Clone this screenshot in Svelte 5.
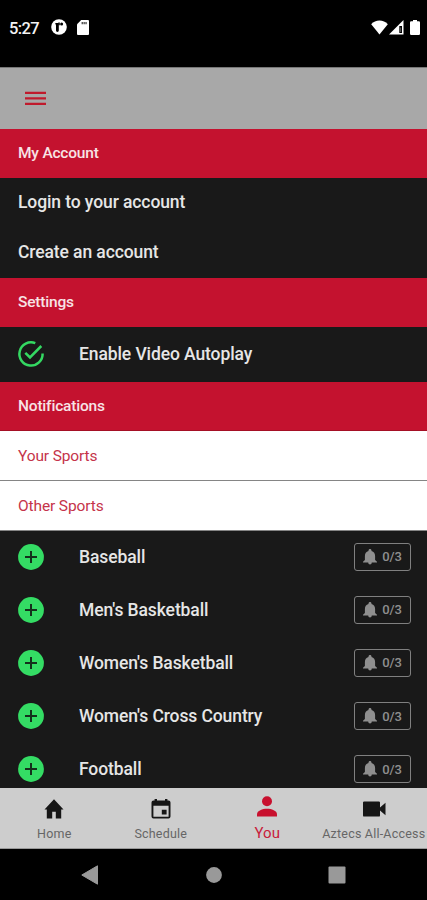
<script>
  const accountLinks = ['Login to your account', 'Create an account'];

  const sports = [
    { name: "Baseball", alerts: '0/3' },
    { name: "Men's Basketball", alerts: '0/3' },
    { name: "Women's Basketball", alerts: '0/3' },
    { name: "Women's Cross Country", alerts: '0/3' },
    { name: "Football", alerts: '0/3' }
  ];

  const tabs = [
    { id: 'home', label: 'Home' },
    { id: 'schedule', label: 'Schedule' },
    { id: 'you', label: 'You' },
    { id: 'video', label: 'Aztecs All-Access' }
  ];

  let activeTab = $state('you');
</script>

<div class="screen">
  <div class="status-bar">
    <div class="status-left">
      <span class="time">5:27</span>
      <svg width="16" height="16" viewBox="0 0 16 16">
        <circle cx="8" cy="8" r="7.8" fill="#fff" />
        <path d="M4.2 4h3.6v7.600a1.400 1.400 0 0 1-2.800 0V6.500z" fill="#000" />
        <path d="M7.300 3.600h1.500v2.600H7.300z" fill="#000" />
        <circle cx="10.600" cy="5.100" r="1.500" fill="#000" />
      </svg>
      <svg class="sd-card" width="12" height="15" viewBox="0 0 12 15">
        <path d="M4.2 0H11a1 1 0 0 1 1 1v13a1 1 0 0 1-1 1H1a1 1 0 0 1-1-1V4.3z" fill="#fff" />
        <path d="M4.6 2h1.300v2.200H4.6zM6.500 2h1.300v2.200H6.500zM8.400 2h1.300v2.200H8.400z" fill="#444" />
      </svg>
    </div>
    <div class="status-right">
      <svg width="17" height="15" viewBox="0 0 17 15">
        <path d="M8.5 14.5L.2 4.2C2.4 1.8 5.3.5 8.5.5s6.100 1.300 8.300 3.700z" fill="#fff" />
      </svg>
      <svg width="15" height="15" viewBox="0 0 15 15">
        <path d="M14.500 0v14.500H0z" fill="#fff" />
        <path d="M10.300 6h2.700v7h-2.700z" fill="#000" />
        <path d="M11.300 7.500h.8V12h-.8z" fill="#777" />
      </svg>
      <svg class="battery" width="10" height="15" viewBox="0 0 10 15">
        <path d="M3 0h4v1.200h1.800A1.200 1.200 0 0 1 10 2.400v11.400A1.200 1.200 0 0 1 8.800 15H1.200A1.200 1.200 0 0 1 0 13.800V2.400a1.200 1.200 0 0 1 1.200-1.200H3z" fill="#fff" />
      </svg>
    </div>
  </div>

  <header class="app-bar">
    <button class="menu" aria-label="Menu">
      <svg width="21" height="15" viewBox="0 0 21 15">
        <path d="M0 1.800h21M0 7.300h21M0 12.800h21" stroke="#c01a2c" stroke-width="2.200" />
      </svg>
    </button>
  </header>

  <main>
    <h2 class="section">My Account</h2>
    {#each accountLinks as link}
      <div class="link">{link}</div>
    {/each}

    <h2 class="section">Settings</h2>
    <div class="option">
      <svg class="option-icon" width="26" height="26" viewBox="0 0 26 26" fill="none" stroke="#34d862" stroke-width="2.500">
        <path d="M17.300 2.200A11.600 11.600 0 1 0 24.600 12.500" />
        <path d="M7.300 11.800l4.700 4.700L23.300 5" />
      </svg>
      <span class="label">Enable Video Autoplay</span>
    </div>

    <h2 class="section last">Notifications</h2>
    <h3 class="sub">Your Sports</h3>
    <h3 class="sub">Other Sports</h3>

    <ul class="sports">
      {#each sports as sport}
        <li class="sport">
          <svg class="option-icon" width="26" height="26" viewBox="0 0 26 26">
            <circle cx="13" cy="13" r="12.900" fill="#34dc64" />
            <path d="M13 7v12M7 13h12" stroke="#14301c" stroke-width="2" />
          </svg>
          <span class="label">{sport.name}</span>
          <button class="alerts">
            <svg width="14" height="16" viewBox="0 0 14 16">
              <path d="M7 0c.9 0 1.500.6 1.500 1.500v.6c2.400.6 3.600 2.500 3.600 4.900v4L14 12.800v.8H0v-.8L1.900 11V7c0-2.400 1.200-4.300 3.600-4.900v-.6C5.500.6 6.100 0 7 0zM5.200 13.600h3.600a1.800 2 0 0 1-3.600 0z" fill="#8f8f8f" />
            </svg>
            <span>{sport.alerts}</span>
          </button>
        </li>
      {/each}
    </ul>
  </main>

  <nav class="tab-bar">
    {#each tabs as tab}
      <button class="tab" class:active={activeTab === tab.id} onclick={() => (activeTab = tab.id)}>
        <svg width="24" height="24" viewBox="0 0 24 24" fill="currentColor">
          {#if tab.id === 'home'}
            <path d="M12 2.300L2.500 12.400h2.300v9h5.400v-6.600h3.600v6.600h5.400v-9h2.300z" />
          {:else if tab.id === 'schedule'}
            <path d="M17.600 12.800h-4.800v4.800h4.800zM16 2v1.600H8V2H5.600v1.600H4.500a2 2 0 0 0-2 2v14a2 2 0 0 0 2 2h15a2 2 0 0 0 2-2v-14a2 2 0 0 0-2-2h-1.100V2zm3.600 17.800H4.400V8.800h15.200z" />
          {:else if tab.id === 'you'}
            <circle cx="12" cy="7.200" r="5" />
            <path d="M2 22.500v-2.300c0-3.600 5.500-5.500 10-5.500s10 1.900 10 5.500v2.300z" />
          {:else}
            <path d="M18 10.500V5.600a1.200 1.200 0 0 0-1.200-1.200H2.200A1.200 1.200 0 0 0 1 5.600v12.800a1.200 1.200 0 0 0 1.200 1.200h14.600a1.200 1.200 0 0 0 1.200-1.200v-4.900l5.500 4.700V5.800z" />
          {/if}
        </svg>
        <span>{tab.label}</span>
      </button>
    {/each}
  </nav>

  <div class="system-nav">
    <svg width="18" height="20" viewBox="0 0 18 20"><path d="M16.500.8v18.400L.8 10z" fill="#999" stroke="#999" stroke-linejoin="round" /></svg>
    <svg width="16" height="16" viewBox="0 0 16 16"><circle cx="8" cy="8" r="7.900" fill="#999" /></svg>
    <svg width="18" height="18" viewBox="0 0 18 18"><rect x=".5" y=".5" width="17" height="17" rx="1" fill="#999" /></svg>
  </div>
</div>

<style>
  :global(body) {
    margin: 0;
    background: #000;
  }

  .screen {
    display: flex;
    flex-direction: column;
    width: 427px;
    height: 900px;
    overflow: hidden;
    background: #000;
    font-family: Roboto, "Liberation Sans", sans-serif;
  }

  svg {
    display: block;
    flex: none;
    overflow: visible;
  }

  button {
    padding: 0;
    border: none;
    background: none;
    font-family: inherit;
  }

  .status-bar {
    display: flex;
    flex: none;
    justify-content: space-between;
    box-sizing: border-box;
    height: 67px;
    padding: 18px 7px 0 9px;
  }

  .status-left,
  .status-right {
    display: flex;
    align-items: center;
    height: 18px;
  }

  .time {
    width: 42px;
    padding-top: 2px;
    color: #f4f4f4;
    font-size: 16.5px;
    font-weight: 500;
    letter-spacing: -0.6px;
  }

  .sd-card {
    margin-left: 10px;
  }

  .status-right {
    gap: 1px;
  }

  .battery {
    margin-left: 5px;
  }

  .app-bar {
    display: flex;
    flex: none;
    align-items: center;
    box-sizing: border-box;
    height: 62px;
    padding-left: 25px;
    border-top: 1px solid #777;
    background: #a8a8a8;
  }

  main {
    flex: none;
    height: 659px;
    overflow: hidden;
    background: #191919;
  }

  .section {
    box-sizing: border-box;
    height: 49px;
    margin: 0;
    padding-left: 18px;
    background: #c4122f;
    color: #f7e3e5;
    font-size: 15.5px;
    font-weight: 500;
    letter-spacing: -0.2px;
    line-height: 49px;
  }

  .section.last {
    border-bottom: 1px solid #a50f25;
  }

  .link {
    height: 50px;
    padding-left: 18px;
    color: #e6e6e6;
    font-size: 17.5px;
    font-weight: 500;
    letter-spacing: -0.1px;
    line-height: 49px;
  }

  .option,
  .sport {
    display: flex;
    align-items: center;
    box-sizing: border-box;
    padding: 0 16px 2px 18px;
  }

  .option {
    height: 55px;
  }

  .option-icon {
    margin-right: 35px;
  }

  .label {
    flex: 1;
    color: #e6e6e6;
    font-size: 17.5px;
    font-weight: 500;
    letter-spacing: -0.1px;
    white-space: nowrap;
  }

  .sub {
    box-sizing: border-box;
    height: 50px;
    margin: 0;
    padding-left: 18px;
    border-bottom: 1px solid #858585;
    background: #fff;
    color: #c5344a;
    font-size: 15.5px;
    font-weight: 400;
    letter-spacing: -0.12px;
    line-height: 50px;
  }

  .sports {
    margin: 0;
    padding: 0;
    list-style: none;
  }

  .sport {
    height: 53.2px;
  }

  .alerts {
    display: flex;
    align-items: center;
    justify-content: center;
    gap: 5px;
    box-sizing: border-box;
    width: 57px;
    height: 28px;
    border: 1px solid #808080;
    border-radius: 3px;
    color: #8f8f8f;
    font-size: 13px;
    font-weight: 500;
    letter-spacing: -0.1px;
  }

  .tab-bar {
    display: grid;
    flex: none;
    grid-template-columns: repeat(4, 1fr);
    box-sizing: border-box;
    height: 61px;
    padding-left: 1px;
    border-bottom: 1px solid #999;
    background: #cdcdcd;
  }

  .tab {
    display: flex;
    flex-direction: column;
    align-items: center;
    min-width: 0;
    padding-top: 9px;
    color: #161616;
    font-size: 12.5px;
    letter-spacing: 0.2px;
    line-height: 20px;
    white-space: nowrap;
  }

  .tab span {
    margin-top: 3px;
    color: #666;
  }

  .tab.active {
    padding-top: 6px;
    color: #c8102e;
    font-size: 15px;
    letter-spacing: 0;
  }

  .tab.active span {
    margin-top: 5px;
    color: #c8203a;
  }

  .system-nav {
    display: flex;
    flex: 1;
    align-items: center;
    justify-content: space-between;
    padding: 0 81px;
  }
</style>
